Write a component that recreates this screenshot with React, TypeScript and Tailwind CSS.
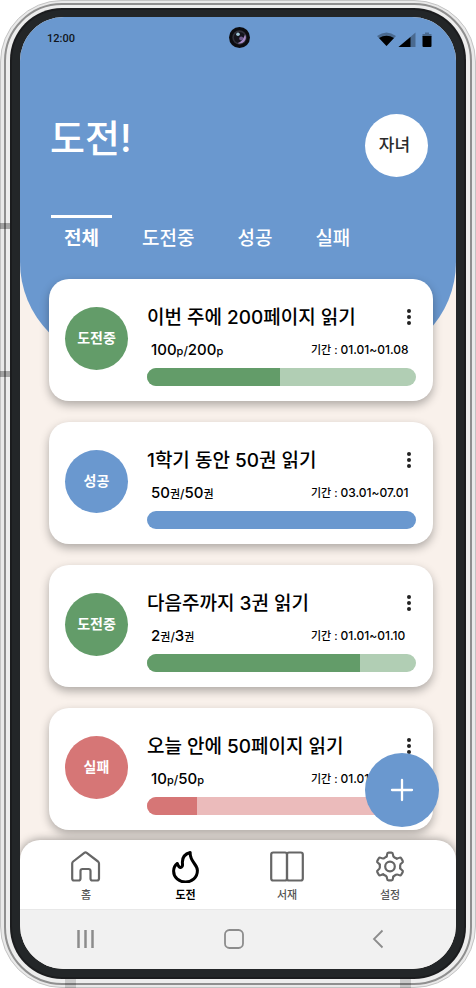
type Status = "ongoing" | "success" | "failed";

type Challenge = {
  title: string;
  status: Status;
  current: number;
  goal: number;
  unit: string;
  period: string;
  percent: number;
};

const STATUS: Record<Status, { label: string; solid: string; track: string }> = {
  ongoing: { label: "도전중", solid: "bg-[#639c69]", track: "bg-[#b1ceb4]" },
  success: { label: "성공", solid: "bg-[#6a98cf]", track: "bg-[#b5cce7]" },
  failed: { label: "실패", solid: "bg-[#d67676]", track: "bg-[#ebbbbb]" },
};

const CHALLENGES: Challenge[] = [
  { title: "이번 주에 200페이지 읽기", status: "ongoing", current: 100, goal: 200, unit: "p", period: "01.01~01.08", percent: 49.5 },
  { title: "1학기 동안 50권 읽기", status: "success", current: 50, goal: 50, unit: "권", period: "03.01~07.01", percent: 100 },
  { title: "다음주까지 3권 읽기", status: "ongoing", current: 2, goal: 3, unit: "권", period: "01.01~01.10", percent: 79 },
  { title: "오늘 안에 50페이지 읽기", status: "failed", current: 10, goal: 50, unit: "p", period: "01.01~01.02", percent: 18.6 },
];

const TABS = ["전체", "도전중", "성공", "실패"];

function StatusBar() {
  return (
    <div className="grid h-11 grid-cols-3 items-center pr-6 pl-[27px] font-['Roboto',sans-serif]">
      <span className="text-[11px] font-medium text-[#10151c]">12:00</span>
      <svg className="mb-1 size-[21px] justify-self-center" viewBox="0 0 21 21" aria-hidden="true">
        <circle cx="10.5" cy="10.5" r="10.5" fill="#0c0c10" />
        <circle cx="10.5" cy="10.5" r="7.2" fill="#30303a" />
        <circle cx="10.5" cy="10.5" r="5.6" fill="#15141c" />
        <path d="M16 7.500a6 6 0 0 1-7.500 8.500c3-.5 5.500-3 7.500-8.500z" fill="#a88cc8" />
        <circle cx="12.200" cy="11.500" r="2" fill="#6f5a8c" />
        <circle cx="9" cy="7.200" r="1.800" fill="#9fc6d8" />
      </svg>
      <svg className="h-[15px] w-[55px] justify-self-end" viewBox="0 0 55 15" aria-hidden="true">
        <path d="M0 4Q9.500-3 19 4L9.500 14z" fill="#000" opacity=".3" />
        <path d="M2 6Q9.500 1.500 17 6L9.500 14z" fill="#000" />
        <path d="M21.500 15H38.500V.5z" fill="#000" opacity=".3" />
        <path d="M21.500 15H33.500V5z" fill="#000" />
        <path d="M45.500 5V2H48V.5h4V2h2.500v3z" fill="#000" opacity=".3" />
        <path d="M45.500 4h9v10a1 1 0 0 1-1 1h-7a1 1 0 0 1-1-1z" fill="#000" />
      </svg>
    </div>
  );
}

function Header() {
  return (
    <header className="h-[345px] shrink-0 rounded-b-[100px] bg-[#6a98cf]">
      <StatusBar />
      <div className="mt-[53px] flex items-start justify-between pr-7 pl-[30px]">
        <h1 className="text-[38px] leading-[48px] font-medium text-white">도전!</h1>
        <button type="button" className="size-[63px] rounded-full bg-white pr-1 text-[17px] font-medium text-[#2b2b2b]">
          자녀
        </button>
      </div>
      <nav className="mt-[38px] flex gap-[17px] pl-[31px]" aria-label="도전 상태">
        {TABS.map((tab, i) => (
          <button
            key={tab}
            type="button"
            className={
              i === 0
                ? "border-t-[3px] border-white px-[13px] pt-[7px] text-[19px] leading-7 font-bold text-white"
                : "border-t-[3px] border-transparent px-[13px] pt-[7px] text-[19px] leading-7 font-medium text-white"
            }
          >
            {tab}
          </button>
        ))}
      </nav>
    </header>
  );
}

function Amount({ value, unit }: { value: number; unit: string }) {
  return (
    <>
      {value}
      <span className="text-[11px]">{unit}</span>
    </>
  );
}

function ChallengeCard({ challenge }: { challenge: Challenge }) {
  const { label, solid, track } = STATUS[challenge.status];
  return (
    <li className="flex h-[122px] shrink-0 gap-[19px] rounded-[20px] bg-white pr-[17px] pl-4 shadow-[0_4px_10px_rgba(0,0,0,0.3)]">
      <div className={`mt-7 flex size-[63px] shrink-0 items-center justify-center rounded-full pb-0.5 text-sm font-bold text-white ${solid}`}>
        {label}
      </div>
      <div className="min-w-0 flex-1 pt-[25px]">
        <div className="flex items-start justify-between">
          <h2 className="text-[19px] leading-7 font-medium whitespace-nowrap text-black">{challenge.title}</h2>
          <button type="button" aria-label="더보기" className="flex w-[15px] justify-center pt-[5px]">
            <svg className="h-4 w-1" viewBox="0 0 4 16" fill="#222" aria-hidden="true">
              <circle cx="2" cy="2" r="2" />
              <circle cx="2" cy="8" r="2" />
              <circle cx="2" cy="14" r="2" />
            </svg>
          </button>
        </div>
        <div className="mt-2 flex h-5 items-center pl-1 font-medium text-black">
          <p className="w-40 text-[15px] leading-5">
            <Amount value={challenge.current} unit={challenge.unit} />
            <span className="text-xs">/</span>
            <Amount value={challenge.goal} unit={challenge.unit} />
          </p>
          <p className="text-xs leading-5 whitespace-nowrap">
            <span className="text-[11px]">기간 : </span>
            {challenge.period}
          </p>
        </div>
        <div className={`mt-2 h-[18px] overflow-hidden rounded-full ${track}`}>
          <div className={`h-full ${solid}`} style={{ width: `${challenge.percent}%` }} />
        </div>
      </div>
    </li>
  );
}

function HomeIcon() {
  return (
    <svg className="h-8 w-[30px]" viewBox="0 0 30 32" fill="none" stroke="#666" strokeWidth="2.200" strokeLinejoin="round" aria-hidden="true">
      <path d="M13.300 1.900Q14.500 1 15.700 1.900L27 10.500Q28 11.300 28 12.500V27.500Q28 29.500 26 29.500H21.500Q19.500 29.500 19.500 27.500V20Q19.500 18 17.500 18H11.500Q9.500 18 9.500 20V27.500Q9.500 29.500 7.500 29.500H3Q1.200 29.500 1.200 27.500V12.500Q1.200 11.300 2.200 10.500z" />
    </svg>
  );
}

function FlameIcon() {
  return (
    <svg className="h-8 w-[27px]" viewBox="0 0 27 32" fill="none" stroke="#000" strokeWidth="3" strokeLinejoin="round" aria-hidden="true">
      <path d="M18.200 1.500C12.500 3 9.800 7 10.500 13C11 17 7.300 18.300 5.300 12.500C2.800 14.500 1.600 17 1.600 20C1.600 26.500 7 31 13.500 31S25.400 26.500 25.400 19.500C25.400 13 17.500 10.500 18.200 1.500z" />
    </svg>
  );
}

function BookIcon() {
  return (
    <svg className="h-8 w-[34px]" viewBox="0 0 34 32" fill="none" stroke="#666" strokeWidth="2.200" aria-hidden="true">
      <rect x="1.200" y="1.500" width="15.800" height="28" rx="2" />
      <rect x="17" y="1.500" width="15.800" height="28" rx="2" />
    </svg>
  );
}

function GearIcon() {
  return (
    <svg className="h-8 w-[30px]" viewBox="-15 -15.500 30 32" fill="none" stroke="#666" strokeWidth="2.200" strokeLinecap="round" aria-hidden="true">
      <circle r="4.800" />
      {[0, 60, 120, 180, 240, 300].map((angle) => (
        <path
          key={angle}
          transform={`rotate(${angle})`}
          d="M-3.500-9.800Q-3-10.500-2.900-12.200Q-2.800-13.800-1.500-13.800H1.500Q2.800-13.800 2.900-12.200Q3-10 4.200-9.300Q5.400-8.600 6.740-7.930"
        />
      ))}
    </svg>
  );
}

const NAV = [
  { label: "홈", icon: HomeIcon, active: false },
  { label: "도전", icon: FlameIcon, active: true },
  { label: "서재", icon: BookIcon, active: false },
  { label: "설정", icon: GearIcon, active: false },
];

function BottomNav() {
  return (
    <nav className="relative flex h-[69px] shrink-0 items-start justify-between rounded-t-[20px] bg-white px-[51px] pt-[11px] shadow-[0_0_10px_rgba(0,0,0,0.4)]">
      {NAV.map(({ label, icon: Icon, active }) => (
        <a
          key={label}
          href="#"
          className={
            active
              ? "flex flex-col items-center gap-1 text-[11px] leading-4 font-bold text-black"
              : "flex flex-col items-center gap-1 text-[11px] leading-4 font-medium text-[#555]"
          }
        >
          <Icon />
          {label}
        </a>
      ))}
    </nav>
  );
}

function SystemBar() {
  return (
    <div className="relative flex h-[60px] shrink-0 items-center justify-between border-t border-[#e8e8e8] bg-[#f1f1f1] pr-[69px] pb-0.5 pl-[57px]">
      <button type="button" aria-label="최근 앱">
        <svg className="h-5 w-[18px]" viewBox="0 0 18 20" stroke="#8c8c8c" strokeWidth="2.500" aria-hidden="true">
          <path d="M1.500 1v18M8.500 1v18M15.500 1v18" />
        </svg>
      </button>
      <button type="button" aria-label="홈 화면">
        <svg className="size-5" viewBox="0 0 20 20" fill="none" stroke="#8c8c8c" strokeWidth="1.800" aria-hidden="true">
          <rect x="1" y="1" width="18" height="18" rx="4.500" />
        </svg>
      </button>
      <button type="button" aria-label="뒤로">
        <svg className="h-5 w-[15px]" viewBox="0 0 15 20" fill="none" stroke="#8c8c8c" strokeWidth="1.800" aria-hidden="true">
          <path d="M10.500 1.500L2 10L10.500 18.500" />
        </svg>
      </button>
    </div>
  );
}

export default function App() {
  return (
    <div className="relative h-screen overflow-hidden bg-white font-['Inter','Noto_Sans_CJK_KR',sans-serif]">
      <div className="h-full rounded-[62px] border border-[#c4c4c4] bg-[#e9e9e9] px-[3px] py-0.5">
        <div className="h-full rounded-[58px] border-2 border-[#8f8f8f] bg-[#ededed] px-1 pt-[3px] pb-1">
          <div className="h-full rounded-[52px] bg-[#1b1c1e] p-0.5">
            <div className="h-full rounded-[50px] bg-[#232628] px-2 pt-[7px] pb-2">
              <div className="flex h-full flex-col overflow-hidden rounded-[44px] bg-[#f9f1eb]">
                <main className="relative flex min-h-0 flex-1 flex-col overflow-hidden">
                  <Header />
                  <ul className="-mt-[83px] flex flex-col gap-[21px] pr-[23px] pl-[29px]">
                    {CHALLENGES.map((challenge) => (
                      <ChallengeCard key={challenge.title} challenge={challenge} />
                    ))}
                  </ul>
                  <button
                    type="button"
                    aria-label="도전 추가"
                    className="absolute right-[17px] bottom-[13px] flex size-[74px] items-center justify-center rounded-full bg-[#6a98cf]"
                  >
                    <svg className="size-6" viewBox="0 0 24 24" stroke="#fff" strokeWidth="2.300" strokeLinecap="round" aria-hidden="true">
                      <path d="M12 2v20M2 12h20" />
                    </svg>
                  </button>
                </main>
                <BottomNav />
                <SystemBar />
              </div>
            </div>
          </div>
        </div>
      </div>
      <div className="absolute top-[223px] left-0 h-1.5 w-2.5 bg-black/30" />
      <div className="absolute top-[371px] left-0 h-1.5 w-2.5 bg-black/30" />
      <div className="absolute bottom-0 left-[65px] h-[9px] w-[11px] bg-black/15" />
      <div className="absolute right-[65px] bottom-0 h-[9px] w-[11px] bg-black/15" />
    </div>
  );
}
